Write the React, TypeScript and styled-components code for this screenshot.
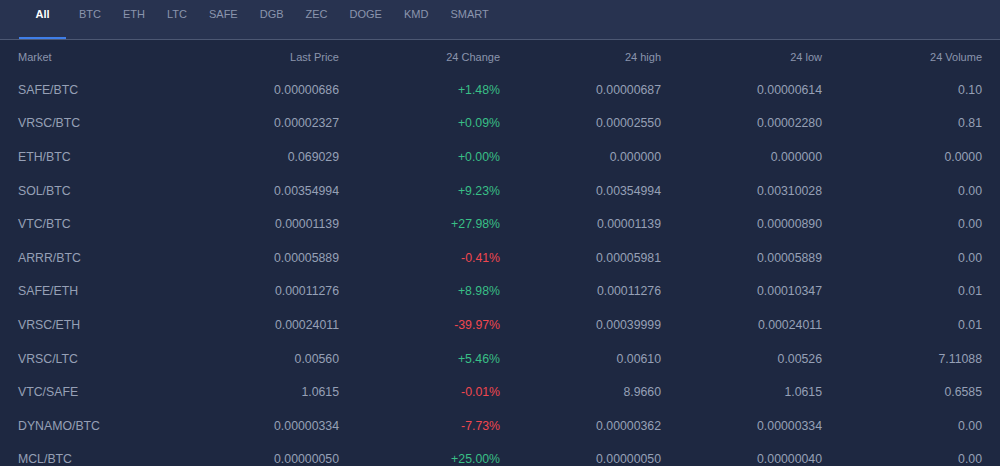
import React from "react";
import styled, { createGlobalStyle } from "styled-components";

const Global = createGlobalStyle`
  body { margin: 0; background: #1e2841; font-family: "Liberation Sans", Arial, sans-serif; }
`;

const Page = styled.div`
  width: 1000px;
  height: 466px;
  overflow: hidden;
  background: #1e2841;
`;

const TabBar = styled.div`
  display: flex;
  height: 39px;
  padding-left: 19px;
  background: #283350;
  border-bottom: 1px solid #4d5873;
`;

const Tab = styled.div<{ $active?: boolean }>`
  display: flex;
  align-items: flex-start;
  justify-content: center;
  padding: 8px 11px 0;
  font-size: 11px;
  color: ${(p) => (p.$active ? "#ffffff" : "#8b95ad")};
  font-weight: ${(p) => (p.$active ? 700 : 400)};
  box-shadow: ${(p) => (p.$active ? "inset 0 -2px 0 #3f7ee8" : "none")};
  ${(p) => p.$active && "width: 47px; padding: 8px 0 0; margin-right: 2px;"}
`;

const Table = styled.div`
  padding: 0 18px;
`;

const Row = styled.div<{ $head?: boolean }>`
  display: grid;
  grid-template-columns: 160px 161px 161px 161px 161px 160px;
  height: ${(p) => (p.$head ? "33px" : "33.6px")};
  align-items: center;
  font-size: ${(p) => (p.$head ? "11px" : "12.3px")};
  color: ${(p) => (p.$head ? "#8b95ad" : "#96a0b6")};
`;

const Cell = styled.div<{ $left?: boolean; $tone?: "up" | "down" }>`
  text-align: ${(p) => (p.$left ? "left" : "right")};
  color: ${(p) => (p.$tone === "up" ? "#39bf86" : p.$tone === "down" ? "#f0474f" : "inherit")};
`;

const tabs = ["All", "BTC", "ETH", "LTC", "SAFE", "DGB", "ZEC", "DOGE", "KMD", "SMART"];

const rows = [
  ["SAFE/BTC", "0.00000686", "+1.48%", "0.00000687", "0.00000614", "0.10"],
  ["VRSC/BTC", "0.00002327", "+0.09%", "0.00002550", "0.00002280", "0.81"],
  ["ETH/BTC", "0.069029", "+0.00%", "0.000000", "0.000000", "0.0000"],
  ["SOL/BTC", "0.00354994", "+9.23%", "0.00354994", "0.00310028", "0.00"],
  ["VTC/BTC", "0.00001139", "+27.98%", "0.00001139", "0.00000890", "0.00"],
  ["ARRR/BTC", "0.00005889", "-0.41%", "0.00005981", "0.00005889", "0.00"],
  ["SAFE/ETH", "0.00011276", "+8.98%", "0.00011276", "0.00010347", "0.01"],
  ["VRSC/ETH", "0.00024011", "-39.97%", "0.00039999", "0.00024011", "0.01"],
  ["VRSC/LTC", "0.00560", "+5.46%", "0.00610", "0.00526", "7.11088"],
  ["VTC/SAFE", "1.0615", "-0.01%", "8.9660", "1.0615", "0.6585"],
  ["DYNAMO/BTC", "0.00000334", "-7.73%", "0.00000362", "0.00000334", "0.00"],
  ["MCL/BTC", "0.00000050", "+25.00%", "0.00000050", "0.00000040", "0.00"],
];

export default function App() {
  return (
    <Page>
      <Global />
      <TabBar>
        {tabs.map((t, i) => (
          <Tab key={t} $active={i === 0}>{t}</Tab>
        ))}
      </TabBar>
      <Table>
        <Row $head>
          <Cell $left>Market</Cell>
          <Cell>Last Price</Cell>
          <Cell>24 Change</Cell>
          <Cell>24 high</Cell>
          <Cell>24 low</Cell>
          <Cell>24 Volume</Cell>
        </Row>
        {rows.map((r) => (
          <Row key={r[0]}>
            <Cell $left>{r[0]}</Cell>
            <Cell>{r[1]}</Cell>
            <Cell $tone={r[2].startsWith("-") ? "down" : "up"}>{r[2]}</Cell>
            <Cell>{r[3]}</Cell>
            <Cell>{r[4]}</Cell>
            <Cell>{r[5]}</Cell>
          </Row>
        ))}
      </Table>
    </Page>
  );
}
